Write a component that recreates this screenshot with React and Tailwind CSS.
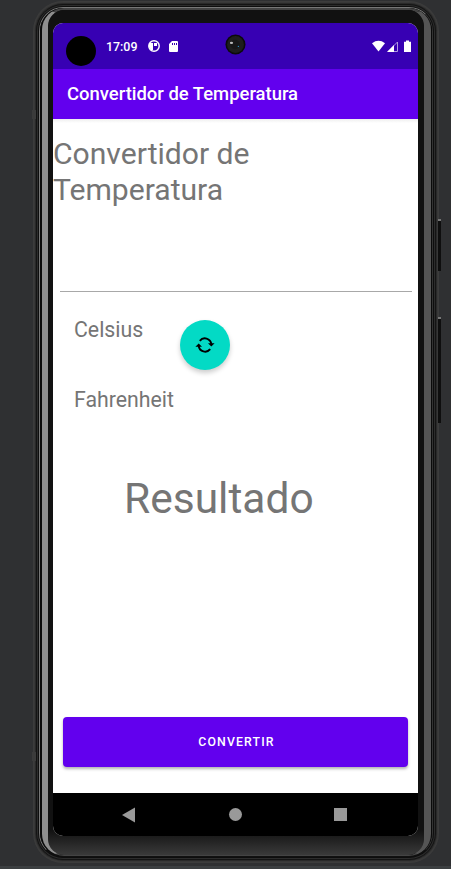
export default function App() {
  return (
    <div className="flex h-[869px] w-[451px] flex-col justify-between overflow-hidden bg-[#2f3032] font-[Roboto,sans-serif]">
      <div className="relative ml-[33px] mt-px h-[862px] w-[406px]">
        <div className="absolute -left-px top-[109px] h-[9px] w-1 bg-[#3b3b3b]" />
        <div className="absolute -left-px top-[751px] h-[9px] w-1 bg-[#3b3b3b]" />
        <div className="absolute left-[405px] top-[218px] h-[52px] w-[3px] border-t-2 border-[#777] bg-[#0e0e0e]" />
        <div className="absolute left-[405px] top-[316px] h-[106px] w-[3px] border-t-2 border-[#777] bg-[#0e0e0e]" />
        {/* Phone bezel: concentric metal rings */}
        <div className="h-full rounded-[30px] bg-[#3c3c3c] p-px">
          <div className="h-full rounded-[29px] bg-[#383838] p-px">
            <div className="h-full rounded-[28px] bg-[#292929] p-px">
              <div className="h-full rounded-[27px] bg-[#141414] p-px">
                <div className="h-full rounded-[26px] bg-[#2c2c2c] p-px">
                  <div className="h-full rounded-[25px] bg-[#0e0e0e] p-px">
                    <div className="h-full rounded-[24px] border-b border-l border-r border-t border-b-[#111] border-l-[#777] border-r-[#333] border-t-[#777]">
                      <div className="h-full rounded-[23px] bg-[#0a0a0a] pl-[2px] pr-px">
                        <div className="h-full rounded-[22px] border-b border-l-[6px] border-r-[7px] border-t-2 border-b-[#444] border-l-[#8e8e8e] border-r-[#555] border-t-[#444]">
                          <div className="flex h-full flex-col rounded-[16px] bg-[linear-gradient(#111,#111_97%,#3a3a3a)] pb-[19px] pl-[5px] pr-[6px] pt-[13px]">
                            <Screen />
                          </div>
                        </div>
                      </div>
                    </div>
                  </div>
                </div>
              </div>
            </div>
          </div>
        </div>
      </div>
      <div className="h-[3px] bg-[#3c3f41]" />
    </div>
  );
}

function Screen() {
  return (
    <div className="flex h-[813px] w-[365px] shrink-0 flex-col overflow-hidden rounded-[10px] bg-white">
      <div className="relative flex h-[46px] shrink-0 items-center bg-[#3700b3] text-white">
        <div className="ml-[13px] mt-[10px] size-[30px] rounded-full bg-black" />
        <span className="ml-[10px] mt-[2px] w-[42px] text-[12.4px] font-medium leading-none">17:09</span>
        <svg className="size-[12px]" viewBox="0 0 12 12">
          <circle cx="6" cy="6" r="5.2" fill="none" stroke="white" strokeWidth="1.5" />
          <path d="M1 3h4v7H3L1 7zM6 3h3v3H6z" fill="white" />
        </svg>
        <svg className="ml-[9px] h-[11px] w-[9px]" viewBox="0 0 9 11">
          <path fillRule="evenodd" d="M3 0h5q1 0 1 1v9q0 1-1 1H1q-1 0-1-1V3zM3 2v2h1V2zM5 2v2h1V2zM7 2v2h1V2z" fill="white" />
        </svg>
        <svg className="absolute left-[172px] top-[11px] size-[21px]" viewBox="0 0 22 22">
          <circle cx="11" cy="11" r="10.5" fill="#0b0b0b" />
          <circle cx="11" cy="11" r="8.8" fill="#1e1e1e" />
          <circle cx="10.5" cy="11" r="5" fill="#171717" />
          <ellipse cx="6.8" cy="9.3" rx="1.7" ry="1.2" fill="#bbb" />
          <circle cx="14" cy="13" r="0.7" fill="#268bc0" />
        </svg>
        <svg className="ml-auto mr-[7px] h-[13px] w-[39px]" viewBox="0 0 39 13">
          <path d="M0 3.2Q6.5-1.7 13 3.2L6.5 11.5z" fill="white" />
          <path d="M16 11.5L25.5 2v9.500z" fill="none" stroke="#b09ae0" strokeWidth="1" />
          <path d="M15 12L22 5v7z" fill="white" />
          <path d="M32 1.8h2V.5h3v1.3h2V12h-7z" fill="white" />
        </svg>
      </div>
      <div className="flex h-[50px] shrink-0 items-center bg-[#6200ee] pl-[14px] pt-[2px] text-[18.45px] font-medium text-white">
        <h1 className="whitespace-nowrap">Convertidor de Temperatura</h1>
      </div>
      <main className="flex h-[674px] shrink-0 flex-col bg-[linear-gradient(#eee,#fff_4px)] text-[#757575]">
        <h2 className="mt-[17px] h-[72px] text-[30.1px] leading-[35.5px]">Convertidor de<br />Temperatura</h2>
        <div className="ml-[7px] mt-[83px] h-px w-[352px] bg-[#a8a8a8]" />
        <div className="flex h-[150px]">
          <div className="ml-[21px] w-[106px] text-[21.3px] leading-[26px]">
            <p className="mt-[25px]">Celsius</p>
            <p className="mt-[44px]">Fahrenheit</p>
          </div>
          <button className="-ml-[0.5px] mt-[28px] flex size-[50px] items-center justify-center rounded-full bg-[#03dac5] shadow-[0_3px_5px_rgba(0,0,0,0.2)]">
            <svg className="h-[18px] w-[20px]" viewBox="0 0 20 18" fill="none">
              <path d="M4.800 4.800A6.500 6.500 0 0 1 16.300 8M15.200 13.200A6.500 6.500 0 0 1 3.700 10" stroke="black" strokeWidth="1.9" />
              <path d="M13 7.200h6.600L16.300 10.400zM.4 10.800h6.600L3.700 7.600z" fill="black" />
            </svg>
          </button>
        </div>
        <p className="ml-[71px] mt-[31px] h-[52px] text-[42.500px] leading-[52px]">Resultado</p>
        <button className="ml-[10px] mt-[192px] h-[50px] w-[345px] shrink-0 rounded-[4px] bg-[#6200ee] pl-[2px] pt-px text-[12.3px] font-medium tracking-[1.15px] text-white shadow-[0_2px_3px_rgba(0,0,0,0.3)]">CONVERTIR</button>
      </main>
      <nav className="flex h-[43px] shrink-0 items-center bg-black">
        <svg className="ml-[69px] h-[16px] w-[14px]" viewBox="0 0 14 16"><path d="M0 8L13 .5v15z" fill="#999" /></svg>
        <div className="ml-[93px] size-[13px] rounded-full bg-[#999]" />
        <div className="ml-[92px] size-[13px] bg-[#999]" />
      </nav>
    </div>
  );
}
